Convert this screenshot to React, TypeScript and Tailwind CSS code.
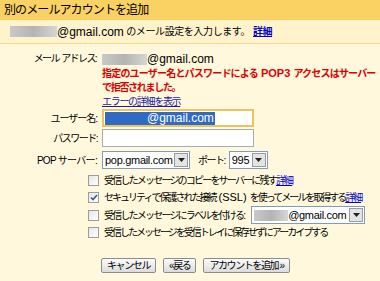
function Blur({ w }: { w: number }) {
  return (
    <span
      className="inline-block h-[11px] shrink-0 align-middle bg-gradient-to-r from-[#c9c9c9] via-[#b4b4b4] to-[#d6d6d6]"
      style={{ width: w }}
    />
  );
}

function Select({ w, children }: { w: number; children: React.ReactNode }) {
  return (
    <div
      className="flex h-[18px] shrink-0 items-center border border-[#7f9db9] bg-white pl-[2px] pr-[1px]"
      style={{ width: w }}
    >
      <span className="flex flex-1 items-center overflow-hidden whitespace-nowrap text-[11px] leading-[14px] tracking-[-0.3px]">{children}</span>
      <span className="flex h-[14px] w-[14px] shrink-0 items-center justify-center border border-[#9a9a9a] bg-[#e4e4e4]">
        <svg width="7" height="4" viewBox="0 0 7 4">
          <path d="M0 0h7L3.5 4z" fill="#222" />
        </svg>
      </span>
    </div>
  );
}

function Check({ checked }: { checked?: boolean }) {
  return (
    <span className="flex h-[11px] w-[11px] shrink-0 items-center justify-center border border-[#9c9c9c] bg-gradient-to-br from-[#e6e6e6] to-white">
      {checked && (
        <svg width="8" height="7" viewBox="0 0 8 7">
          <path d="M1 3.5l2 2 4-4.5" stroke="#2f5d9a" strokeWidth="1.6" fill="none" />
        </svg>
      )}
    </span>
  );
}

function Btn({ children }: { children: React.ReactNode }) {
  return (
    <button className="h-[15px] whitespace-nowrap rounded-[2px] border border-[#8c8c8c] bg-gradient-to-b from-[#fbfbfb] to-[#dcdcdc] px-[5px] text-[10px] leading-[13px] tracking-[-1.4px] text-black">
      {children}
    </button>
  );
}

export default function App() {
  return (
    <div className="h-[281px] w-[380px] overflow-hidden whitespace-nowrap bg-[#fff8dc] font-['Liberation_Sans','Noto_Sans_CJK_JP',sans-serif] text-[10px] text-black">
      {/* Title bar */}
      <div className="h-[20px] bg-[#fad163] pl-[4px] text-[12px] leading-[20px] tracking-[-0.9px]">
        別のメールアカウントを追加
      </div>

      {/* Sub bar */}
      <div className="flex h-[24px] items-center border-b border-[#f3d98f] bg-[#fff3cc] pl-[10px]">
        <Blur w={47} />
        <span className="text-[12px]">@gmail.com</span>
        <span className="tracking-[-0.4px]">&nbsp;のメール設定を入力します。</span>
        <a href="#" className="ml-[3px] font-bold tracking-[-0.5px] text-[#0000cc] underline">
          詳細
        </a>
      </div>

      {/* Form */}
      <div className="mt-[8px] flex h-[14px] items-center leading-[14px]">
        <span className="w-[97px] pr-[1px] text-right tracking-[-1.6px]">メール&nbsp;&nbsp;アドレス:</span>
        <span className="ml-[5px] flex items-center text-[12px]">
          <Blur w={45} />
          @gmail.com
        </span>
      </div>

      <div className="ml-[102px] leading-[14px] font-bold text-[#dd0000]">
        <div className="tracking-[-0.8px]">
          指定のユーザー名とパスワードによる
          <span className="text-[11px] tracking-normal"> POP3 </span>
          アクセスはサーバー
        </div>
        <div className="tracking-[-1.3px]">で拒否されました。</div>
      </div>

      <div className="ml-[102px] h-[13px] leading-[13px]">
        <a href="#" className="tracking-[-1.3px] text-[#1a1aa6] underline">
          エラーの詳細を表示
        </a>
      </div>

      <div className="mt-[1px] flex h-[18px] items-center">
        <span className="w-[97px] text-right tracking-[-1px]">ユーザー名:</span>
        <div className="ml-[5px] flex h-[18px] w-[152px] items-center border-2 border-[#ecc45a] bg-white pl-[1px]">
          <span className="bg-[#316ac5] pr-[1px] text-[12px] leading-[13px] text-white">
            <span className="inline-block w-[42px]" />
            @gmail.com
          </span>
        </div>
      </div>

      <div className="mt-[2px] flex h-[18px] items-center">
        <span className="w-[97px] text-right tracking-[-1.5px]">パスワード:</span>
        <div className="ml-[5px] h-[18px] w-[152px] border border-[#a5acb5] bg-white" />
      </div>

      <div className="mt-[4px] flex h-[18px] items-center">
        <span className="w-[97px] text-right tracking-[-0.7px]">POP サーバー:</span>
        <div className="ml-[5px]">
          <Select w={88}>pop.gmail.com</Select>
        </div>
        <span className="ml-[8px] tracking-[-1.5px]">ポート:</span>
        <div className="ml-[4px]">
          <Select w={39}>995</Select>
        </div>
      </div>

      <div className="ml-[88px] mt-[3px] flex flex-col">
        <div className="flex h-[17px] items-center gap-[5px]">
          <Check />
          <span className="tracking-[-1.8px]">
            受信したメッセージのコピーをサーバーに残す
            <a href="#" className="text-[#0000cc] underline">
              詳細
            </a>
          </span>
        </div>
        <div className="flex h-[17px] items-center gap-[5px]">
          <Check checked />
          <span className="tracking-[-2px]">
            セキュリティで保護された接続
            <span className="text-[11px] tracking-normal"> (SSL) </span>
            を使ってメールを取得する
            <a href="#" className="text-[#0000cc] underline">
              詳細
            </a>
          </span>
        </div>
        <div className="flex h-[18px] items-center gap-[5px]">
          <Check />
          <span className="tracking-[-1.8px]">受信したメッセージにラベルを付ける:</span>
          <span className="ml-[2px]">
            <Select w={114}>
              <Blur w={34} />
              @gmail.com
            </Select>
          </span>
        </div>
        <div className="flex h-[17px] items-center gap-[5px]">
          <Check />
          <span className="tracking-[-2px]">受信したメッセージを受信トレイに保存せずにアーカイブする</span>
        </div>
      </div>

      <div className="ml-[101px] mt-[17px] flex gap-[7px]">
        <Btn>キャンセル</Btn>
        <Btn>«戻る</Btn>
        <Btn>アカウントを追加 »</Btn>
      </div>
    </div>
  );
}
